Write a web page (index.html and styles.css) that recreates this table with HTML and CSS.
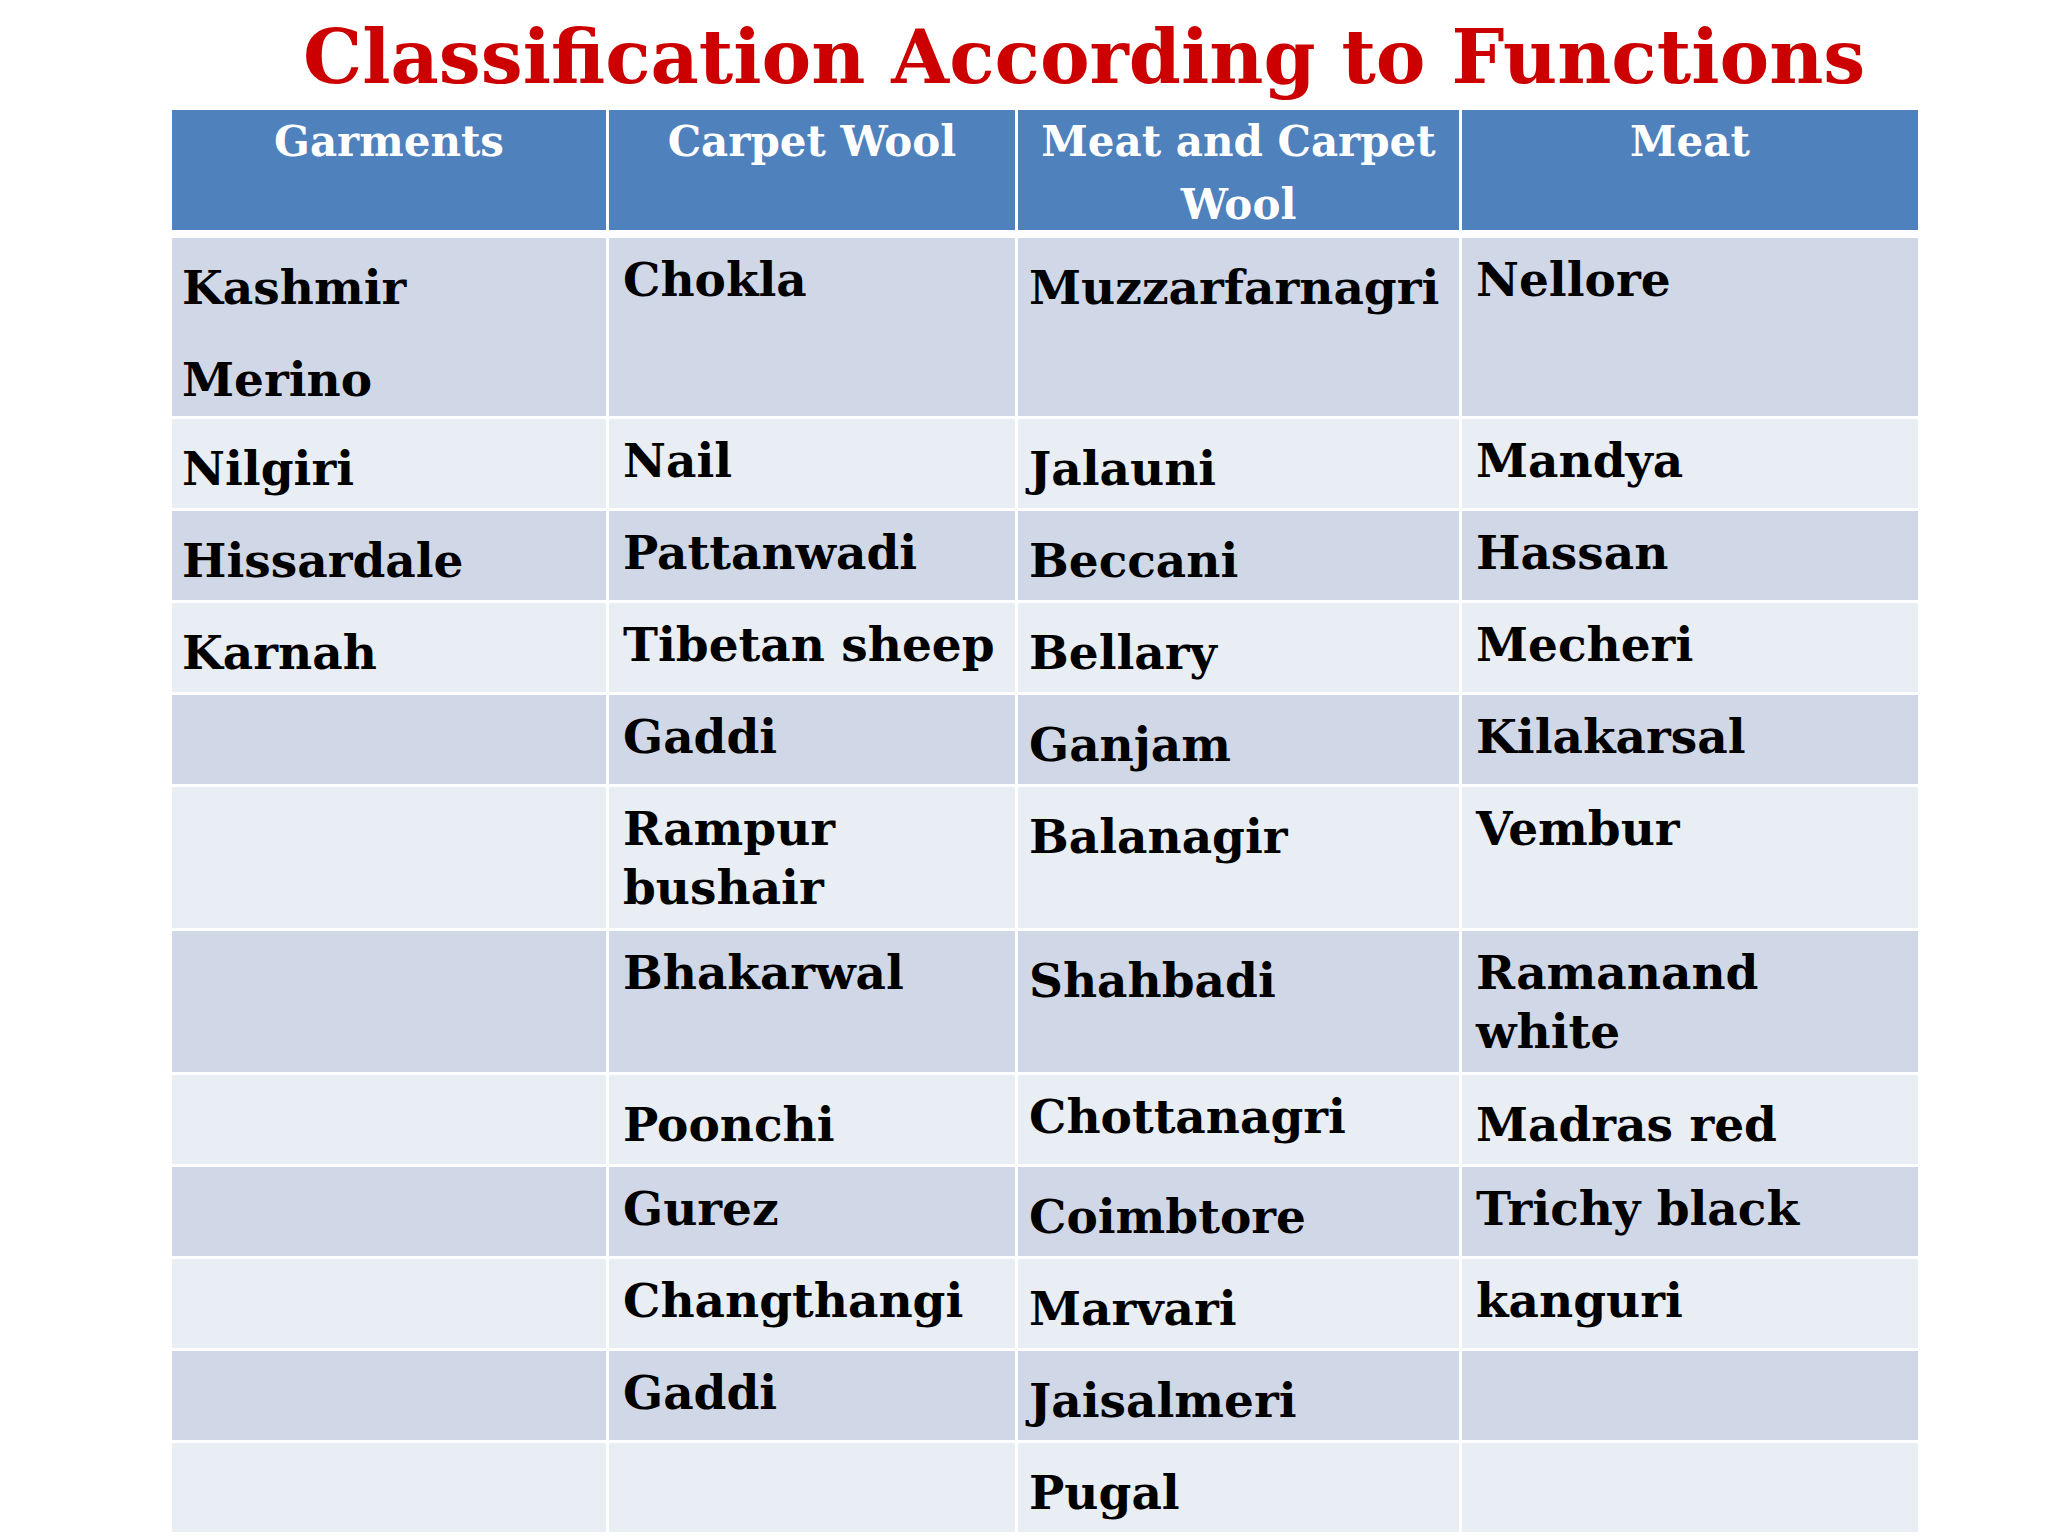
FILE: index.html
```html
<!DOCTYPE html>
<html lang="en">
<head>
<meta charset="utf-8">
<title>Classification According to Functions</title>
<link rel="stylesheet" href="styles.css">
</head>
<body>
<div class="slide">
  <h1 class="title">Classification According to Functions</h1>
  <table class="grid">
    <colgroup>
      <col class="c1"><col class="c2"><col class="c3"><col class="c4">
    </colgroup>
    <thead>
      <tr class="head">
        <th><div class="hcell">Garments</div></th>
        <th><div class="hcell">Carpet Wool</div></th>
        <th><div class="hcell">Meat and Carpet<br>Wool</div></th>
        <th><div class="hcell">Meat</div></th>
      </tr>
    </thead>
    <tbody>
      <tr class="r-first band1">
        <td class="lo"><div>Kashmir</div><div class="para">Merino</div></td>
        <td>Chokla</td>
        <td class="lo">Muzzarfarnagri</td>
        <td>Nellore</td>
      </tr>
      <tr class="r-one band2">
        <td class="lo">Nilgiri</td>
        <td>Nail</td>
        <td class="lo">Jalauni</td>
        <td>Mandya</td>
      </tr>
      <tr class="r-one band1">
        <td class="lo">Hissardale</td>
        <td>Pattanwadi</td>
        <td class="lo">Beccani</td>
        <td>Hassan</td>
      </tr>
      <tr class="r-one band2">
        <td class="lo">Karnah</td>
        <td>Tibetan sheep</td>
        <td class="lo">Bellary</td>
        <td>Mecheri</td>
      </tr>
      <tr class="r-one band1">
        <td></td>
        <td>Gaddi</td>
        <td class="lo">Ganjam</td>
        <td>Kilakarsal</td>
      </tr>
      <tr class="r-two band2">
        <td></td>
        <td>Rampur<br>bushair</td>
        <td class="lo">Balanagir</td>
        <td>Vembur</td>
      </tr>
      <tr class="r-two band1">
        <td></td>
        <td>Bhakarwal</td>
        <td class="lo">Shahbadi</td>
        <td>Ramanand<br>white</td>
      </tr>
      <tr class="r-one band2">
        <td></td>
        <td class="lo">Poonchi</td>
        <td>Chottanagri</td>
        <td class="lo">Madras red</td>
      </tr>
      <tr class="r-one band1">
        <td></td>
        <td>Gurez</td>
        <td class="lo">Coimbtore</td>
        <td>Trichy black</td>
      </tr>
      <tr class="r-one band2">
        <td></td>
        <td>Changthangi</td>
        <td class="lo">Marvari</td>
        <td>kanguri</td>
      </tr>
      <tr class="r-one band1">
        <td></td>
        <td>Gaddi</td>
        <td class="lo">Jaisalmeri</td>
        <td></td>
      </tr>
      <tr class="r-one band2">
        <td></td>
        <td></td>
        <td class="lo">Pugal</td>
        <td></td>
      </tr>
    </tbody>
  </table>
</div>
</body>
</html>
```
FILE: styles.css
```css
html, body {
  margin: 0;
  padding: 0;
  background: #ffffff;
}

.slide {
  width: 2048px;
  height: 1536px;
  overflow: hidden;
  font-family: "DejaVu Serif", "Liberation Serif", serif;
  font-weight: bold;
}

.title {
  margin: 0;
  padding: 4px 0 0 303px;
  height: 103px;
  font-size: 74.5px;
  line-height: 107px;
  font-weight: bold;
  color: #cc0000;
  white-space: nowrap;
}

.grid {
  margin: 0 0 0 169px;
  border-collapse: separate;
  border-spacing: 3px;
  table-layout: fixed;
  width: 1752px;
}

.c1 { width: 434px; }
.c2 { width: 406px; }
.c3 { width: 441px; }
.c4 { width: 456px; }

.grid th,
.grid td {
  box-sizing: border-box;
  vertical-align: top;
  text-align: left;
  white-space: nowrap;
  overflow: hidden;
}

.head th {
  padding: 0;
  background: #4f81bd;
  color: #ffffff;
  font-size: 42px;
  line-height: 63px;
  text-align: center;
}

.hcell {
  height: 120px;
}

/* extra white gap between header and body */
tbody:before {
  content: "";
  display: table-row;
  height: 2px;
}

.grid td {
  font-size: 47px;
  line-height: 59px;
  color: #000000;
  padding: 12px 8px 0 14px;
}

.grid td:first-child {
  padding-left: 10px;
}

.grid td:nth-child(3) {
  padding-left: 11px;
}

.grid td.lo {
  padding-top: 20px;
}

.band1 td { background: #d0d8e8; }
.band2 td { background: #e9edf4; }

.r-first td { height: 178px; }
.r-one td { height: 89px; }
.r-two td { height: 141px; }

.para {
  margin-top: 33px;
}
```
